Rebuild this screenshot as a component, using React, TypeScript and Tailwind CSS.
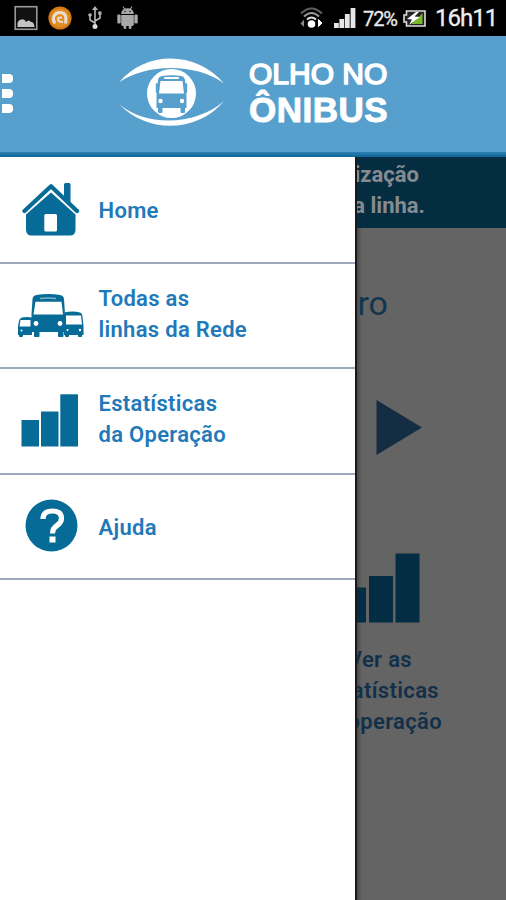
import React from 'react';

interface MenuRowProps {
    icon: React.ReactNode;
    lines: string[];
    className: string;
}

function StatusBar() {
    return (
        <div className="flex h-9 shrink-0 items-center bg-black pl-[14px] pr-[9px]">
            <svg className="mr-[10px]" width="24" height="26" viewBox="0 0 24 26">
                <rect x="1.2" y="1.7" width="21.6" height="22.6" fill="#111" stroke="#9a9a9a" strokeWidth="1.6" />
                <path d="M3.5 22V18Q5 14 8 14.5Q10.500 13.500 12 17Q15 14 17 17Q20 17 20.500 22Z" fill="#c4c4c4" />
            </svg>
            <svg className="mr-4" width="24" height="26" viewBox="0 0 24 26">
                <circle cx="12" cy="13" r="11.6" fill="#d57812" />
                <circle cx="12" cy="13" r="9.5" fill="#e08c28" />
                <path d="M7 18.500C3.500 13 6.500 7.500 12 7.500C17.500 7.500 18.500 11.500 17.500 18.500" fill="none" stroke="#eadfcd" strokeWidth="3" />
                <path d="M15 17Q10 17 10 14.500Q10 12 14 12.500" fill="none" stroke="#eadfcd" strokeWidth="2" />
            </svg>
            <svg className="mr-[15px]" width="14" height="24" viewBox="0 0 14 24" fill="none" stroke="#b5b5b5" strokeWidth="1.6">
                <path d="M7 3V21M7 17L2 14V9M7 15L12 12V7" />
                <path d="M7 0L10 4H4Z" fill="#b5b5b5" stroke="none" />
                <circle cx="7" cy="20.5" r="2.5" fill="#ddd" stroke="none" />
                <circle cx="2" cy="9" r="1.8" fill="#b5b5b5" stroke="none" />
                <rect x="10.3" y="5.5" width="3.2" height="3.2" fill="#b5b5b5" stroke="none" />
            </svg>
            <svg width="21" height="24" viewBox="0 0 21 24" fill="#a8a8a8">
                <path d="M4.2 8C4.2 5.5 5.5 4 7 3L5.5 .7L6.2 .3L8 2.6Q10.5 1.8 13 2.6L14.8 .3L15.5 .7L14 3C15.5 4 16.8 5.5 16.8 8Z" />
                <path d="M4.2 9H16.8V18.5Q16.8 20 15 20H14.5V22Q14.5 23 13 23Q11.7 23 11.7 22V20H9.3V22Q9.3 23 8 23Q6.5 23 6.5 22V20H6Q4.2 20 4.2 18.5Z" />
                <rect x=".3" y="8.5" width="3.4" height="9" rx="1.2" />
                <rect x="17.3" y="8.5" width="3.4" height="9" rx="1.2" />
                <circle cx="8" cy="5.5" r=".8" fill="#222" />
                <circle cx="13" cy="5.5" r=".8" fill="#222" />
            </svg>
            <div className="flex-1" />
            <svg className="mr-[11px]" width="23" height="22" viewBox="0 0 23 22" fill="none" strokeWidth="2">
                <path d="M1 6.5Q11.5 -3.5 22 6.5" stroke="#5f5f5f" />
                <path d="M4 9.5Q11.5 2.5 19 9.5" stroke="#9a9a9a" />
                <path d="M7 12.5Q11.5 8.5 16 12.5" stroke="#ddd" />
                <circle cx="11.5" cy="17" r="3.8" fill="#fff" />
                <path d="M4 12.500V20L.5 16.500Z" fill="#888" />
                <path d="M18.500 12.500L22 16L18.500 19.500Z" fill="#fff" stroke="#fff" strokeWidth="1" />
            </svg>
            <svg className="mr-[7px]" width="22" height="22" viewBox="0 0 22 22" fill="#e6e6e6">
                <rect x="0" y="16" width="4.8" height="5" />
                <rect x="5.4" y="12" width="4.8" height="9" />
                <rect x="10.900" y="7" width="4.8" height="14" />
                <rect x="16.6" y="1" width="4.8" height="20" />
            </svg>
            <span className="w-[35px] whitespace-nowrap pt-[2px] text-[20px] leading-[34px] tracking-[-1.1px] text-[#e9e9e9] [-webkit-text-stroke:0.3px_#e9e9e9]">72%</span>
            <svg className="ml-[5px] mr-[9px]" width="23" height="17" viewBox="0 0 23 17">
                <path d="M3.500 1H22V16H3.500V12H1V5H3.500Z" fill="#222" stroke="#dedede" strokeWidth="1.6" />
                <path d="M19.500 3V14H8L14 9Z" fill="#78b82a" />
                <path d="M13 2L4 9L9 9.500L6 15L17 7L11.500 6.500L16 2Z" fill="#fff" />
            </svg>
            <span className="w-[62px] whitespace-nowrap text-[24px] leading-[34px] tracking-[-1px] text-[#eee] [-webkit-text-stroke:0.3px_#eee]">16h11</span>
        </div>
    );
}

function Logo() {
    return (
        <svg width="106" height="70" viewBox="0 0 106 70">
            <path d="M0 24.500C27 -7.500 77 -7.500 105 25.500C78 5 27 5 0 24.500Z" fill="#fff" />
            <path d="M0 46C28 75.500 78 75.500 105 43C78 67 28 70 0 46Z" fill="#fff" />
            <circle cx="52.500" cy="35.500" r="24.500" fill="#fff" />
            <g fill="#579fcd">
                <path d="M39 22Q39.500 18.500 43 18Q52.500 16.500 62 18Q65.500 18.500 66 22L67.500 37V50H37.500V37Z" />
                <rect x="36.800" y="25" width="2" height="10" rx="1" />
                <rect x="66.200" y="25" width="2" height="10" rx="1" />
                <rect x="39" y="49" width="4.500" height="6" rx="1" />
                <rect x="61.500" y="49" width="4.500" height="6" rx="1" />
            </g>
            <rect x="45" y="19" width="15" height="2" rx="1" fill="#fff" />
            <path d="M41.500 23H63.500L65 35.500H40Z" fill="#fff" />
            <circle cx="41.500" cy="43" r="2.200" fill="#fff" />
            <circle cx="63" cy="43" r="2.200" fill="#fff" />
        </svg>
    );
}

function Header() {
    return (
        <header className="flex h-[116px] shrink-0 bg-[#579fcd]">
            <div className="flex w-[119px] flex-col gap-[6px] pl-[2px] pt-[38px]">
                <span className="h-[9px] w-[11px] rounded-r-[4px] bg-white" />
                <span className="h-[9px] w-[11px] rounded-r-[4px] bg-white" />
                <span className="h-[9px] w-[11px] rounded-r-[4px] bg-white" />
            </div>
            <div className="pt-[22px]">
                <Logo />
            </div>
            <div className="flex flex-col pl-[24px] pt-[20px] font-['Liberation_Sans'] text-white">
                <span className="h-[35px] whitespace-nowrap text-[30px] leading-[36px] [-webkit-text-stroke:1.6px_white]">OLHO NO</span>
                <span className="h-[36px] whitespace-nowrap text-[35px] font-bold leading-[37px] tracking-[0.5px] [-webkit-text-stroke:1px_white]">ÔNIBUS</span>
            </div>
        </header>
    );
}

function HouseIcon() {
    return (
        <svg className="ml-[22px] mt-[26px]" width="58" height="54" viewBox="0 0 58 54">
            <path d="M42 1.500Q42 0 43.500 0H47Q48.500 0 48.500 1.500V22L42 16Z" fill="#076b98" />
            <path d="M29 4.500L55.500 29L52 33V46.500Q52 52 48 52H9.500Q5 52 5 46.500V33L2 29Z" fill="#fff" />
            <path d="M2.500 28L29 3.200L55 28" fill="none" stroke="#076b98" strokeWidth="4.300" strokeLinecap="round" strokeLinejoin="round" />
            <path d="M29 9.500L53.500 31.500V46.500Q53.500 52.500 48 52.500H9.500Q4 52.500 4 46.500V31.500Z" fill="#076b98" />
            <rect x="22.300" y="31" width="12.700" height="17.500" rx="1.500" fill="#fff" />
        </svg>
    );
}

function BusesIcon() {
    return (
        <svg className="ml-[17px] mt-[29px]" width="68" height="45" viewBox="0 0 68 45">
            <g fill="#076b98">
                <path d="M2 28Q2.500 25 5 24.500Q10 23.500 15 24.500V42H1V33Z" />
                <rect x="2" y="40" width="4" height="4" rx="1" />
                <path d="M47 19.500Q56 17.500 63 19.500Q65 20 65.500 23.500L66.500 33V42H47Z" />
                <rect x="61" y="40" width="4" height="4" rx="1" />
                <rect x="48" y="40" width="4" height="4" rx="1" />
                <path d="M15.500 6Q16 2.500 19.500 2Q31 0 43 2Q46.500 2.500 47 6L48 21V39H14.500V21Z" />
                <rect x="17" y="37" width="5.500" height="7" rx="1" />
                <rect x="41" y="37" width="5.500" height="7" rx="1" />
            </g>
            <g fill="#fff">
                <path d="M3.500 27H13.500V33.500H2.500Z" />
                <path d="M49 22.500H64L65 31.500H49Z" />
                <path d="M18.500 8.800H44.500L46 21.500H16.500Z" />
                <circle cx="19" cy="30.500" r="2.400" />
                <circle cx="43" cy="30.500" r="2.400" />
                <circle cx="4.500" cy="37.500" r="1" />
                <circle cx="63" cy="37" r="1.200" />
                <circle cx="50.500" cy="37" r="1" />
            </g>
            <path d="M23 5.500Q31 4.500 39 5.500" fill="none" stroke="#7fb0c8" strokeWidth="1.500" />
        </svg>
    );
}

function BarsIcon() {
    return (
        <svg className="ml-[21px] mt-[25px]" width="58" height="53" viewBox="0 0 58 53" fill="#076b98">
            <rect x=".5" y="26" width="17.500" height="26.500" />
            <rect x="20" y="17.500" width="17.500" height="35" />
            <rect x="39.300" y="0.300" width="17.700" height="52.200" />
        </svg>
    );
}

function HelpIcon() {
    return (
        <svg className="ml-[25px] mt-[24px]" width="53" height="53" viewBox="0 0 53 53">
            <circle cx="26.500" cy="26.500" r="26" fill="#076b98" />
            <path d="M18 20Q18 12 27.500 12Q36.500 12 36.500 19.500Q36.500 23.500 32 26.500Q27.500 29.500 27.500 34.500" fill="none" stroke="#fff" strokeWidth="5.200" />
            <rect x="24.500" y="37.500" width="6" height="6" fill="#fff" />
        </svg>
    );
}

function MenuRow({ icon, lines, className }: MenuRowProps) {
    return (
        <li className={`flex border-b-2 border-[#9ca9bd] ${className}`}>
            <div className="w-[98.500px] shrink-0">{icon}</div>
            <div className={`flex flex-col justify-center text-[22px] font-semibold leading-[31px] tracking-[0.3px] text-[#2179b9] ${lines.length > 1 ? 'pb-1' : 'pt-[2px]'}`}>
                {lines.map((line) => (
                    <span key={line} className="whitespace-nowrap">{line}</span>
                ))}
            </div>
        </li>
    );
}

function Drawer() {
    return (
        <nav className="w-[355px] shrink-0 bg-white">
            <ul>
                <MenuRow className="h-[107px]" icon={<HouseIcon />} lines={['Home']} />
                <MenuRow className="h-[105px]" icon={<BusesIcon />} lines={['Todas as', 'linhas da Rede']} />
                <MenuRow className="h-[106px]" icon={<BarsIcon />} lines={['Estatísticas', 'da Operação']} />
                <MenuRow className="h-[105px]" icon={<HelpIcon />} lines={['Ajuda']} />
            </ul>
        </nav>
    );
}

// Part of the home screen that stays visible, dimmed, next to the open drawer
function DimmedPage() {
    return (
        <main className="flex flex-1 flex-col overflow-hidden border-l-2 border-[#191919] bg-[#646464] bg-linear-to-r from-[#4b4b4b] to-[#646464] to-[5px]">
            <div className="flex h-[71px] shrink-0 flex-col bg-[#052d42] pt-[2px] text-[22px] font-bold leading-[31px] text-[#858b8f]">
                <span className="flex w-[62px] justify-end whitespace-nowrap">ização</span>
                <span className="flex w-[68px] justify-end whitespace-nowrap">a linha.</span>
            </div>
            <div className="mt-[55px] flex w-[31px] justify-end text-[34px] leading-10 text-[#12364e]">ero</div>
            <svg className="ml-[19px] mt-[76px] shrink-0" width="47" height="57" viewBox="0 0 47 57">
                <path d="M.5 1L46 28.500L.5 56Z" fill="#152d43" />
            </svg>
            <svg className="mt-[97px] shrink-0" width="64" height="70" viewBox="0 0 64 70" fill="#032d43">
                <rect x="-14" y="34.500" width="23" height="35" />
                <rect x="12" y="23" width="24" height="46.500" />
                <rect x="38.500" y="0.500" width="24" height="69" />
            </svg>
            <div className="mt-[21px] flex flex-col text-[22px] font-semibold leading-[31px] tracking-[0.35px] text-[#12304a]">
                <span className="flex w-[55px] justify-end whitespace-nowrap">Ver as</span>
                <span className="flex w-[82px] justify-end whitespace-nowrap">atísticas</span>
                <span className="flex w-[85px] justify-end whitespace-nowrap">operação</span>
            </div>
        </main>
    );
}

export default function App() {
    return (
        <div className="flex h-[900px] w-[506px] flex-col overflow-hidden bg-white font-['Roboto',sans-serif]">
            <StatusBar />
            <Header />
            <div className="h-[5px] shrink-0 bg-linear-to-b from-[#2b80b0] to-[#0b6597]" />
            <div className="flex min-h-0 flex-1">
                <Drawer />
                <DimmedPage />
            </div>
        </div>
    );
}
